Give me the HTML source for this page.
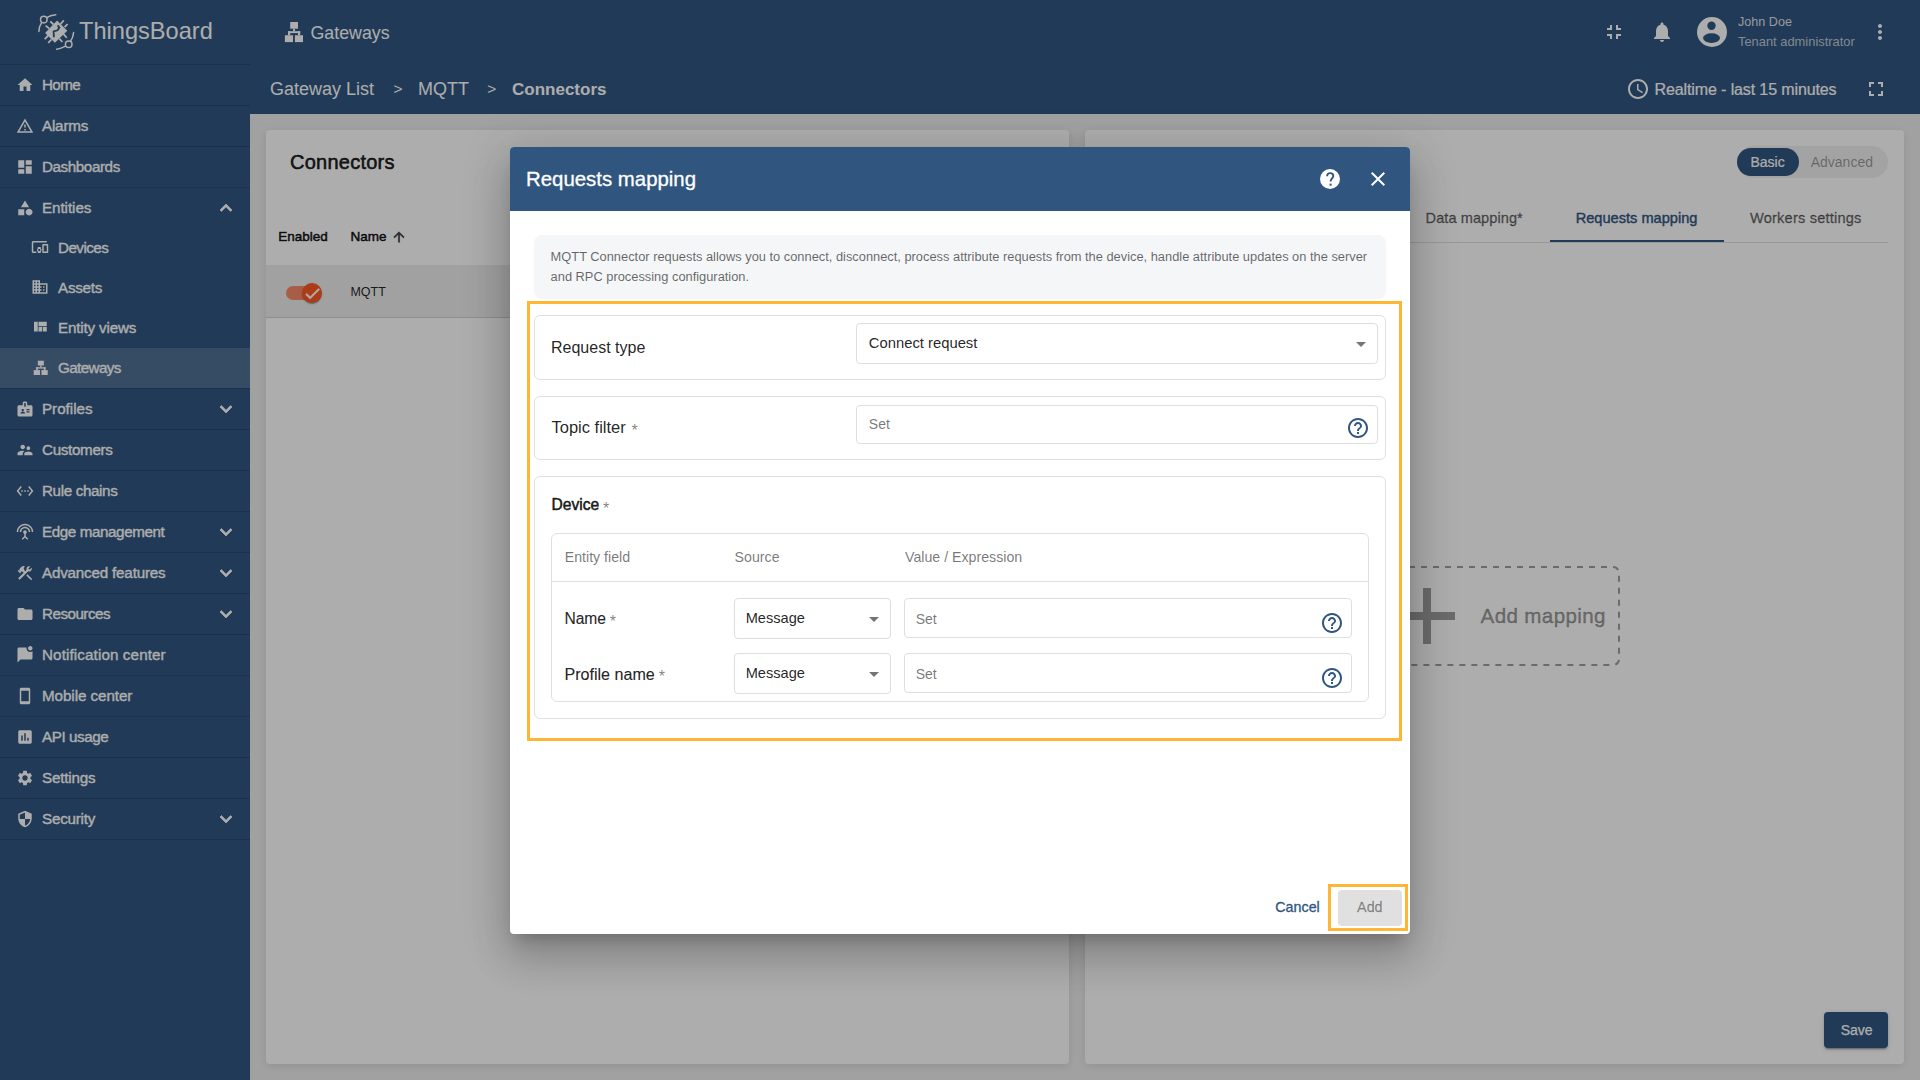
<!DOCTYPE html>
<html><head><meta charset="utf-8"><title>ThingsBoard - Requests mapping</title>
<style>
*{box-sizing:border-box;margin:0;padding:0}
html,body{width:1920px;height:1080px;overflow:hidden;background:#eeeeee;font-family:"Liberation Sans",sans-serif}
.a{position:absolute;display:block}
.t{position:absolute;line-height:1;white-space:nowrap}
.card{position:absolute;background:#fff;border-radius:4px;box-shadow:0 2px 10px rgba(0,0,0,.1)}
</style></head><body>
<div class="a" style="left:0;top:0;width:250px;height:1080px;background:#305680"></div>
<svg class="a" style="left:30px;top:8px" width="60" height="48" viewBox="0 0 60 48">
<g fill="none" stroke="#fff" stroke-width="1.5" stroke-linecap="round">
<circle cx="13.8" cy="11.6" r="3.3"/>
<path d="M16.8 9.6 Q20 7.2 25.8 6.7"/>
<path d="M11.6 14.7 Q9 18.5 8.9 23.6"/>
<circle cx="38.7" cy="36.2" r="3.3"/>
<path d="M40.6 33.2 Q43.4 29 43.6 24.4"/>
<path d="M35.5 38.2 Q31 40.5 26.7 41.3"/>
<path stroke-width="1.8" stroke-linecap="butt" d="M23.6 16.5 L20.2 13.3 M19.2 20.5 L15.6 17.6 M30.6 16 L33.8 12.4 M34.6 19.2 L37.6 16 M33.3 25.7 L36.7 29.8 M29.3 30.6 L32.4 34 M18.3 27.5 L14.7 31.1 M21.4 31.5 L18.2 34.9"/>
</g>
<path fill="#fff" d="M27.1 12.4 L37.3 22.7 L24.9 34.7 L15.1 24.9 Z"/>
<path fill="none" stroke="#305680" stroke-width="1.8" d="M27.6 17.4 L29.4 19.6 L27.5 22.3 L23.6 23.5 L23.9 29.2"/>
</svg>
<div class="t" style="left:79px;top:19.52px;font-size:23.6px;color:#ffffff;">ThingsBoard</div>
<div class="a" style="left:0;top:64px;width:250px;height:1px;background:rgba(0,0,0,0.14)"></div>
<svg class="a" style="left:15.5px;top:75.5px;" width="18" height="18" viewBox="0 0 24 24"><path fill="#ffffff" d="M10 20v-6h4v6h5v-8h3L12 3 2 12h3v8z"/></svg>
<div class="t" style="left:42px;top:77.03px;font-size:15.2px;color:#ffffff;letter-spacing:-0.6px;-webkit-text-stroke:0.35px #ffffff;">Home</div>
<div class="a" style="left:0;top:105px;width:250px;height:1px;background:rgba(0,0,0,0.14)"></div>
<svg class="a" style="left:15.5px;top:116.5px;" width="18" height="18" viewBox="0 0 24 24"><path fill="#ffffff" d="M12 5.99L19.53 19H4.47L12 5.99M12 2L1 21h22L12 2zm1 14h-2v2h2v-2zm0-6h-2v4h2v-4z"/></svg>
<div class="t" style="left:42px;top:118.03px;font-size:15.2px;color:#ffffff;letter-spacing:-0.19px;-webkit-text-stroke:0.35px #ffffff;">Alarms</div>
<div class="a" style="left:0;top:146px;width:250px;height:1px;background:rgba(0,0,0,0.14)"></div>
<svg class="a" style="left:15.5px;top:157.5px;" width="18" height="18" viewBox="0 0 24 24"><path fill="#ffffff" d="M3 13h8V3H3v10zm0 8h8v-6H3v6zm10 0h8V11h-8v10zm0-18v6h8V3h-8z"/></svg>
<div class="t" style="left:42px;top:159.03px;font-size:15.2px;color:#ffffff;letter-spacing:-0.406px;-webkit-text-stroke:0.35px #ffffff;">Dashboards</div>
<div class="a" style="left:0;top:187px;width:250px;height:1px;background:rgba(0,0,0,0.14)"></div>
<svg class="a" style="left:15.5px;top:198.5px;" width="18" height="18" viewBox="0 0 24 24"><path fill="#ffffff" d="M12 2l-5.5 9h11zM17.5 13a4.5 4.5 0 1 0 0.001 0zM3 13.5h8v8H3z"/></svg>
<div class="t" style="left:42px;top:200.03px;font-size:15.2px;color:#ffffff;letter-spacing:-0.064px;-webkit-text-stroke:0.35px #ffffff;">Entities</div>
<svg class="a" style="left:214px;top:196px;stroke:#fff;stroke-width:0.7px" width="24" height="24" viewBox="0 0 24 24"><path fill="#ffffff" d="M12 8l-6 6 1.41 1.41L12 10.83l4.59 4.58L18 14z"/></svg>
<svg class="a" style="left:31px;top:238px;" width="18" height="18" viewBox="0 0 24 24"><path fill="#ffffff" d="M3 6h18V4H3c-1.1 0-2 .9-2 2v12c0 1.1.9 2 2 2h4v-2H3V6zm10 6H9v1.78c-.61.55-1 1.33-1 2.22s.39 1.67 1 2.22V20h4v-1.78c.61-.55 1-1.34 1-2.22s-.39-1.670-1-2.22V12zm-2 5.5c-.83 0-1.5-.67-1.5-1.5s.67-1.5 1.5-1.5 1.5.67 1.5 1.5-.67 1.5-1.5 1.5zM22 8h-6c-.5 0-1 .5-1 1v10c0 .5.5 1 1 1h6c.5 0 1-.5 1-1V9c0-.5-.5-1-1-1zm-1 10h-4v-8h4v8z"/></svg>
<div class="t" style="left:58px;top:239.93px;font-size:15.2px;color:#ffffff;letter-spacing:-0.533px;-webkit-text-stroke:0.35px #ffffff;">Devices</div>
<svg class="a" style="left:31px;top:278px;" width="18" height="18" viewBox="0 0 24 24"><path fill="#ffffff" d="M12 7V3H2v18h20V7H12zM6 19H4v-2h2v2zm0-4H4v-2h2v2zm0-4H4V9h2v2zm0-4H4V5h2v2zm4 12H8v-2h2v2zm0-4H8v-2h2v2zm0-4H8V9h2v2zm0-4H8V5h2v2zm10 12h-8v-2h2v-2h-2v-2h2v-2h-2V9h8v10zm-2-8h-2v2h2v-2zm0 4h-2v2h2v-2z"/></svg>
<div class="t" style="left:58px;top:279.93px;font-size:15.2px;color:#ffffff;letter-spacing:-0.24px;-webkit-text-stroke:0.35px #ffffff;">Assets</div>
<svg class="a" style="left:31px;top:318px;" width="18" height="18" viewBox="0 0 24 24"><path fill="#ffffff" d="M10 18h5v-6h-5v6zm-6 0h5V5H4v13zm12 0h5v-6h-5v6zM10 5v6h11V5H10z"/></svg>
<div class="t" style="left:58px;top:319.93px;font-size:15.2px;color:#ffffff;letter-spacing:-0.164px;-webkit-text-stroke:0.35px #ffffff;">Entity views</div>
<div class="a" style="left:0;top:348px;width:250px;height:40px;background:rgba(255,255,255,0.155)"></div>
<svg class="a" style="left:33.3px;top:360px" width="15.5" height="15.6" viewBox="0 0 20 22" preserveAspectRatio="none"><g fill="#fff"><rect x="6.2" y="1" width="7.8" height="6.7"/><rect x="9.1" y="7.7" width="1.9" height="2.6"/><rect x="4" y="10.2" width="12.2" height="1.9"/><rect x="4" y="10.2" width="2.2" height="4.1"/><rect x="14" y="10.2" width="2.2" height="4.1"/><rect x="0.9" y="14.25" width="8.1" height="6.85"/><rect x="10.9" y="14.25" width="8.1" height="6.85"/></g></svg>
<div class="t" style="left:58px;top:359.93px;font-size:15.2px;color:#ffffff;letter-spacing:-0.6px;-webkit-text-stroke:0.35px #ffffff;">Gateways</div>
<div class="a" style="left:0;top:388px;width:250px;height:1px;background:rgba(0,0,0,0.14)"></div>
<svg class="a" style="left:15.5px;top:399.5px;" width="18" height="18" viewBox="0 0 24 24"><path fill="#ffffff" d="M20 7h-5V4c0-1.1-.9-2-2-2h-2c-1.1 0-2 .9-2 2v3H4c-1.1 0-2 .9-2 2v11c0 1.1.9 2 2 2h16c1.1 0 2-.9 2-2V9c0-1.1-.9-2-2-2zM9 12c.83 0 1.5.67 1.5 1.5S9.83 15 9 15s-1.5-.67-1.5-1.5S8.17 12 9 12zm3 6H6v-.75c0-1 2-1.5 3-1.5s3 .5 3 1.5V18zm1-9h-2V4h2v5zm5 7.5h-4V15h4v1.5zm0-3h-4V12h4v1.5z"/></svg>
<div class="t" style="left:42px;top:401.03px;font-size:15.2px;color:#ffffff;letter-spacing:-0.014px;-webkit-text-stroke:0.35px #ffffff;">Profiles</div>
<div class="a" style="left:0;top:429px;width:250px;height:1px;background:rgba(0,0,0,0.14)"></div>
<svg class="a" style="left:214px;top:397px;stroke:#fff;stroke-width:0.7px" width="24" height="24" viewBox="0 0 24 24"><path fill="#ffffff" d="M16.59 8.59L12 13.17 7.41 8.59 6 10l6 6 6-6z"/></svg>
<svg class="a" style="left:15.5px;top:440.5px;" width="18" height="18" viewBox="0 0 24 24"><path fill="#ffffff" d="M16.5 12c1.38 0 2.49-1.12 2.49-2.5S17.88 7 16.5 7C15.12 7 14 8.12 14 9.5s1.12 2.5 2.5 2.5zM9 11c1.66 0 2.99-1.34 2.99-3S10.66 5 9 5C7.34 5 6 6.34 6 8s1.34 3 3 3zm7.5 3c-1.83 0-5.5.92-5.5 2.75V19h11v-2.25c0-1.83-3.67-2.75-5.5-2.75zM9 13c-2.33 0-7 1.17-7 3.5V19h7v-2.25c0-.85.33-2.34 2.37-3.47C10.5 13.1 9.66 13 9 13z"/></svg>
<div class="t" style="left:42px;top:442.03px;font-size:15.2px;color:#ffffff;letter-spacing:-0.325px;-webkit-text-stroke:0.35px #ffffff;">Customers</div>
<div class="a" style="left:0;top:470px;width:250px;height:1px;background:rgba(0,0,0,0.14)"></div>
<svg class="a" style="left:15.5px;top:481.5px;" width="18" height="18" viewBox="0 0 24 24"><path fill="#ffffff" d="M7.77 6.76L6.23 5.48.82 12l5.41 6.52 1.54-1.28L3.42 12l4.35-5.24zM7 13h2v-2H7v2zm10-2h-2v2h2v-2zm-6 2h2v-2h-2v2zm6.77-7.52l-1.54 1.28L20.58 12l-4.35 5.24 1.54 1.28L23.18 12l-5.41-6.52z"/></svg>
<div class="t" style="left:42px;top:483.03px;font-size:15.2px;color:#ffffff;letter-spacing:-0.36px;-webkit-text-stroke:0.35px #ffffff;">Rule chains</div>
<div class="a" style="left:0;top:511px;width:250px;height:1px;background:rgba(0,0,0,0.14)"></div>
<svg class="a" style="left:15.5px;top:522.5px;" width="18" height="18" viewBox="0 0 24 24"><path fill="#ffffff" d="M12 5c-3.87 0-7 3.13-7 7h2c0-2.76 2.24-5 5-5s5 2.24 5 5h2c0-3.87-3.13-7-7-7zm1 9.29c.88-.39 1.5-1.26 1.5-2.29 0-1.38-1.12-2.5-2.5-2.5S9.5 10.62 9.5 12c0 1.02.62 1.9 1.5 2.29v3.3L7.59 21 9 22.41l3-3 3 3L16.41 21 13 17.59v-3.3zM12 1C5.93 1 1 5.93 1 12h2c0-4.97 4.03-9 9-9s9 4.03 9 9h2c0-6.07-4.93-11-11-11z"/></svg>
<div class="t" style="left:42px;top:524.03px;font-size:15.2px;color:#ffffff;letter-spacing:-0.4px;-webkit-text-stroke:0.35px #ffffff;">Edge management</div>
<div class="a" style="left:0;top:552px;width:250px;height:1px;background:rgba(0,0,0,0.14)"></div>
<svg class="a" style="left:214px;top:520px;stroke:#fff;stroke-width:0.7px" width="24" height="24" viewBox="0 0 24 24"><path fill="#ffffff" d="M16.59 8.59L12 13.17 7.41 8.59 6 10l6 6 6-6z"/></svg>
<svg class="a" style="left:15.5px;top:563.5px;" width="18" height="18" viewBox="0 0 24 24"><path fill="#ffffff" d="M13.78 15.17l1.41-1.41 6.36 6.36-1.41 1.41zM17.5 10c1.93 0 3.5-1.57 3.5-3.5 0-.58-.16-1.12-.41-1.59l-2.7 2.7-1.49-1.49 2.7-2.7C18.62 3.16 18.08 3 17.5 3 15.57 3 14 4.57 14 6.5c0 .41.08.8.21 1.16l-1.85 1.85-1.78-1.78.71-.71-1.41-1.41L12 3.49c-1.17-1.17-3.07-1.17-4.24 0L4.22 7.03l1.41 1.41H2.81l-.71.71 3.54 3.54.71-.71V9.15l1.41 1.41.71-.71 1.78 1.78-7.41 7.41 2.12 2.12L16.34 9.79c.36.13.75.21 1.16.21z"/></svg>
<div class="t" style="left:42px;top:565.03px;font-size:15.2px;color:#ffffff;letter-spacing:-0.188px;-webkit-text-stroke:0.35px #ffffff;">Advanced features</div>
<div class="a" style="left:0;top:593px;width:250px;height:1px;background:rgba(0,0,0,0.14)"></div>
<svg class="a" style="left:214px;top:561px;stroke:#fff;stroke-width:0.7px" width="24" height="24" viewBox="0 0 24 24"><path fill="#ffffff" d="M16.59 8.59L12 13.17 7.41 8.59 6 10l6 6 6-6z"/></svg>
<svg class="a" style="left:15.5px;top:604.5px;" width="18" height="18" viewBox="0 0 24 24"><path fill="#ffffff" d="M10 4H4c-1.1 0-1.99.9-1.99 2L2 18c0 1.1.9 2 2 2h16c1.1 0 2-.9 2-2V8c0-1.1-.9-2-2-2h-8l-2-2z"/></svg>
<div class="t" style="left:42px;top:606.03px;font-size:15.2px;color:#ffffff;letter-spacing:-0.513px;-webkit-text-stroke:0.35px #ffffff;">Resources</div>
<div class="a" style="left:0;top:634px;width:250px;height:1px;background:rgba(0,0,0,0.14)"></div>
<svg class="a" style="left:214px;top:602px;stroke:#fff;stroke-width:0.7px" width="24" height="24" viewBox="0 0 24 24"><path fill="#ffffff" d="M16.59 8.59L12 13.17 7.41 8.59 6 10l6 6 6-6z"/></svg>
<svg class="a" style="left:15.5px;top:645.5px;" width="18" height="18" viewBox="0 0 24 24"><path fill="#ffffff" d="M22 6.98V16c0 1.1-.9 2-2 2H6l-4 4V4c0-1.1.9-2 2-2h10.1c-.06.32-.1.66-.1 1 0 2.76 2.24 5 5 5 1.13 0 2.16-.39 3-1.02zM16 3c0 1.66 1.34 3 3 3s3-1.34 3-3-1.34-3-3-3-3 1.34-3 3z"/></svg>
<div class="t" style="left:42px;top:647.03px;font-size:15.2px;color:#ffffff;letter-spacing:0.117px;-webkit-text-stroke:0.35px #ffffff;">Notification center</div>
<div class="a" style="left:0;top:675px;width:250px;height:1px;background:rgba(0,0,0,0.14)"></div>
<svg class="a" style="left:15.5px;top:686.5px;" width="18" height="18" viewBox="0 0 24 24"><path fill="#ffffff" d="M17 1.01L7 1c-1.1 0-1.99.9-1.99 2v18c0 1.1.89 2 1.99 2h10c1.1 0 2-.9 2-2V3c0-1.1-.9-1.99-2-1.99zM17 19H7V5h10v14z"/></svg>
<div class="t" style="left:42px;top:688.03px;font-size:15.2px;color:#ffffff;letter-spacing:-0.067px;-webkit-text-stroke:0.35px #ffffff;">Mobile center</div>
<div class="a" style="left:0;top:716px;width:250px;height:1px;background:rgba(0,0,0,0.14)"></div>
<svg class="a" style="left:15.5px;top:727.5px;" width="18" height="18" viewBox="0 0 24 24"><path fill="#ffffff" d="M19 3H5c-1.1 0-2 .9-2 2v14c0 1.1.9 2 2 2h14c1.1 0 2-.9 2-2V5c0-1.1-.9-2-2-2zM9 17H7v-7h2v7zm4 0h-2V7h2v10zm4 0h-2v-4h2v4z"/></svg>
<div class="t" style="left:42px;top:729.03px;font-size:15.2px;color:#ffffff;letter-spacing:-0.425px;-webkit-text-stroke:0.35px #ffffff;">API usage</div>
<div class="a" style="left:0;top:757px;width:250px;height:1px;background:rgba(0,0,0,0.14)"></div>
<svg class="a" style="left:15.5px;top:768.5px;" width="18" height="18" viewBox="0 0 24 24"><path fill="#ffffff" d="M19.14 12.94c.04-.3.06-.61.06-.94 0-.32-.02-.64-.07-.94l2.03-1.58c.18-.14.23-.41.12-.61l-1.92-3.32c-.12-.22-.37-.29-.59-.22l-2.39.96c-.5-.38-1.03-.7-1.62-.94l-.36-2.54c-.04-.24-.24-.41-.48-.41h-3.84c-.24 0-.43.17-.47.41l-.36 2.54c-.59.24-1.13.57-1.62.94l-2.39-.96c-.22-.08-.47 0-.59.22L2.74 8.87c-.12.21-.08.47.12.61l2.03 1.58c-.05.3-.09.63-.09.94s.02.64.07.94l-2.03 1.58c-.18.14-.23.41-.12.61l1.92 3.32c.12.22.37.29.59.22l2.39-.96c.5.38 1.03.7 1.62.94l.36 2.54c.05.24.24.41.48.41h3.84c.24 0 .44-.17.47-.41l.36-2.54c.59-.24 1.13-.56 1.62-.94l2.39.96c.22.08.47 0 .59-.22l1.92-3.32c.12-.22.07-.47-.12-.61l-2.01-1.58zM12 15.6c-1.98 0-3.6-1.62-3.6-3.6s1.62-3.6 3.6-3.6 3.6 1.62 3.6 3.6-1.62 3.6-3.6 3.6z"/></svg>
<div class="t" style="left:42px;top:770.03px;font-size:15.2px;color:#ffffff;letter-spacing:-0.171px;-webkit-text-stroke:0.35px #ffffff;">Settings</div>
<div class="a" style="left:0;top:798px;width:250px;height:1px;background:rgba(0,0,0,0.14)"></div>
<svg class="a" style="left:15.5px;top:809.5px;" width="18" height="18" viewBox="0 0 24 24"><path fill="#ffffff" d="M12 1L3 5v6c0 5.55 3.84 10.74 9 12 5.16-1.26 9-6.45 9-12V5l-9-4zm0 10.99h7c-.53 4.12-3.28 7.79-7 8.94V12H5V6.3l7-3.11v8.8z"/></svg>
<div class="t" style="left:42px;top:811.03px;font-size:15.2px;color:#ffffff;letter-spacing:-0.214px;-webkit-text-stroke:0.35px #ffffff;">Security</div>
<div class="a" style="left:0;top:839px;width:250px;height:1px;background:rgba(0,0,0,0.14)"></div>
<svg class="a" style="left:214px;top:807px;stroke:#fff;stroke-width:0.7px" width="24" height="24" viewBox="0 0 24 24"><path fill="#ffffff" d="M16.59 8.59L12 13.17 7.41 8.59 6 10l6 6 6-6z"/></svg>
<div class="a" style="left:250px;top:0;width:1670px;height:114px;background:#305680"></div>
<svg class="a" style="left:284px;top:21px" width="20" height="22" viewBox="0 0 20 22" preserveAspectRatio="none"><g fill="#fff"><rect x="6.2" y="1" width="7.8" height="6.7"/><rect x="9.1" y="7.7" width="1.9" height="2.6"/><rect x="4" y="10.2" width="12.2" height="1.9"/><rect x="4" y="10.2" width="2.2" height="4.1"/><rect x="14" y="10.2" width="2.2" height="4.1"/><rect x="0.9" y="14.25" width="8.1" height="6.85"/><rect x="10.9" y="14.25" width="8.1" height="6.85"/></g></svg>
<div class="t" style="left:310.5px;top:24.93px;font-size:17.8px;color:#ffffff;">Gateways</div>
<div class="t" style="left:270px;top:79.76px;font-size:18px;color:#ffffff;">Gateway List</div>
<div class="t" style="left:393.5px;top:81.08px;font-size:15.5px;color:#ffffff;">&gt;</div>
<div class="t" style="left:418px;top:79.76px;font-size:18px;color:#ffffff;">MQTT</div>
<div class="t" style="left:487.3px;top:81.08px;font-size:15.5px;color:#ffffff;">&gt;</div>
<div class="t" style="left:512px;top:80.61px;font-size:17px;color:#ffffff;font-weight:bold;">Connectors</div>
<svg class="a" style="left:1602px;top:20px;" width="24" height="24" viewBox="0 0 24 24"><path fill="#ffffff" d="M5 16h3v3h2v-5H5v2zm3-8H5v2h5V5H8v3zm6 11h2v-3h3v-2h-5v5zm2-11V5h-2v5h5V8h-3z"/></svg>
<svg class="a" style="left:1650px;top:19.5px;" width="24" height="24" viewBox="0 0 24 24"><path fill="#ffffff" d="M12 22c1.1 0 2-.9 2-2h-4c0 1.1.89 2 2 2zm6-6v-5c0-3.07-1.64-5.64-4.5-6.32V4c0-.83-.67-1.5-1.5-1.5s-1.5.67-1.5 1.5v.68C7.63 5.36 6 7.92 6 11v5l-2 2v1h16v-1l-2-2z"/></svg>
<svg class="a" style="left:1697px;top:17px" width="30" height="30" viewBox="0 0 30 30"><circle cx="15" cy="15" r="15" fill="#fff"/><circle cx="14.5" cy="8.8" r="4.2" fill="#305680"/><ellipse cx="14.5" cy="21.1" rx="8.5" ry="4.8" fill="#305680"/></svg>
<div class="t" style="left:1738px;top:16.33px;font-size:12.6px;color:rgba(255,255,255,0.85);">John Doe</div>
<div class="t" style="left:1738px;top:35.88px;font-size:12.9px;color:rgba(255,255,255,0.7);">Tenant administrator</div>
<svg class="a" style="left:1868px;top:20px;" width="24" height="24" viewBox="0 0 24 24"><path fill="#ffffff" d="M12 8c1.1 0 2-.9 2-2s-.9-2-2-2-2 .9-2 2 .9 2 2 2zm0 2c-1.1 0-2 .9-2 2s.9 2 2 2 2-.9 2-2-.9-2-2-2zm0 6c-1.1 0-2 .9-2 2s.9 2 2 2 2-.9 2-2-.9-2-2-2z"/></svg>
<svg class="a" style="left:1626px;top:77px;" width="24" height="24" viewBox="0 0 24 24"><path fill="#ffffff" d="M11.99 2C6.47 2 2 6.48 2 12s4.47 10 9.99 10C17.52 22 22 17.52 22 12S17.52 2 11.99 2zM12 20c-4.42 0-8-3.58-8-8s3.58-8 8-8 8 3.58 8 8-3.58 8-8 8zm.5-13H11v6l5.25 3.15.75-1.23-4.5-2.67z"/></svg>
<div class="t" style="left:1654.6px;top:82.06px;font-size:16px;color:#ffffff;letter-spacing:-0.12px;-webkit-text-stroke:0.2px #ffffff;">Realtime - last 15 minutes</div>
<svg class="a" style="left:1864px;top:76.5px;" width="24" height="24" viewBox="0 0 24 24"><path fill="#ffffff" d="M7 14H5v5h5v-2H7v-3zm-2-4h2V7h3V5H5v5zm12 7h-3v2h5v-5h-2v3zM14 5v2h3v3h2V5h-5z"/></svg>
<div class="a" style="left:250px;top:114px;width:1670px;height:966px;background:#eeeeee"></div>
<div class="card" style="left:266px;top:130px;width:803px;height:934px"></div>
<div class="card" style="left:1085px;top:130px;width:819px;height:934px"></div>
<div class="t" style="left:290px;top:151.67px;font-size:20.0px;color:rgba(0,0,0,0.87);letter-spacing:0.25px;-webkit-text-stroke:0.6px rgba(0,0,0,0.87);">Connectors</div>
<div class="t" style="left:278.3px;top:229.87px;font-size:13.5px;color:rgba(0,0,0,0.87);-webkit-text-stroke:0.55px rgba(0,0,0,0.87);">Enabled</div>
<div class="t" style="left:350.4px;top:229.87px;font-size:13.5px;color:rgba(0,0,0,0.87);-webkit-text-stroke:0.55px rgba(0,0,0,0.87);">Name</div>
<svg class="a" style="left:391.3px;top:229.3px;stroke:rgba(0,0,0,0.75);stroke-width:0.6px" width="16" height="16" viewBox="0 0 24 24"><path fill="rgba(0,0,0,0.75)" d="M4 12l1.41 1.41L11 7.83V20h2V7.83l5.58 5.59L20 12l-8-8-8 8z"/></svg>
<div class="a" style="left:266px;top:265px;width:803px;height:53px;background:#eeeeee;border-bottom:1px solid rgba(0,0,0,0.12)"></div>
<div class="a" style="left:286px;top:286px;width:34px;height:14px;border-radius:7px;background:rgba(255,87,34,0.66)"></div>
<div class="a" style="left:302px;top:283px;width:20px;height:20px;border-radius:10px;background:#ff5722;box-shadow:0 2px 1px -1px rgba(0,0,0,.2),0 1px 1px 0 rgba(0,0,0,.14),0 1px 3px 0 rgba(0,0,0,.12)"></div>
<svg class="a" style="left:302.5px;top:283.5px" width="19" height="19" viewBox="0 0 24 24"><path fill="#fff" stroke="#fff" stroke-width="0.9" d="M9 16.17L4.83 12l-1.42 1.41L9 19 21 7l-1.41-1.41z"/></svg>
<div class="t" style="left:350.4px;top:286.42px;font-size:12.5px;color:rgba(0,0,0,0.87);">MQTT</div>
<div class="a" style="left:1737px;top:146px;width:151px;height:31.5px;border-radius:16px;background:rgba(0,0,0,0.06)"></div>
<div class="a" style="left:1737px;top:148px;width:62px;height:28px;border-radius:14px;background:#305680"></div>
<div class="t" style="left:1750.5px;top:154.85px;font-size:14px;color:#ffffff;-webkit-text-stroke:0.2px #ffffff;">Basic</div>
<div class="t" style="left:1810.7px;top:154.85px;font-size:14px;color:rgba(0,0,0,0.38);">Advanced</div>
<div class="a" style="left:1101px;top:242px;width:787px;height:1px;background:rgba(0,0,0,0.12)"></div>
<div class="a" style="left:1550px;top:240px;width:174px;height:2px;background:#305680"></div>
<div class="t" style="left:1425.6px;top:211.14px;font-size:14.6px;color:rgba(0,0,0,0.56);letter-spacing:0.05px;-webkit-text-stroke:0.35px rgba(0,0,0,0.56);">Data mapping*</div>
<div class="t" style="left:1575.7px;top:211.14px;font-size:14.6px;color:#305680;-webkit-text-stroke:0.4px #305680;">Requests mapping</div>
<div class="t" style="left:1750px;top:211.14px;font-size:14.6px;color:rgba(0,0,0,0.56);letter-spacing:0.2px;-webkit-text-stroke:0.35px rgba(0,0,0,0.56);">Workers settings</div>
<svg class="a" style="left:1369px;top:566px" width="251" height="100" viewBox="0 0 251 100"><rect x="1" y="1" width="249" height="98" rx="6" ry="6" fill="none" stroke="rgba(0,0,0,0.38)" stroke-width="2" stroke-dasharray="6 6" stroke-dashoffset="3"/></svg>
<svg class="a" style="left:1379px;top:568px;" width="96" height="96" viewBox="0 0 24 24"><path fill="rgba(0,0,0,0.38)" d="M19 13h-6v6h-2v-6H5v-2h6V5h2v6h6v2z"/></svg>
<div class="t" style="left:1480.6px;top:606.06px;font-size:20.6px;color:rgba(0,0,0,0.38);letter-spacing:0.35px;-webkit-text-stroke:0.45px rgba(0,0,0,0.38);">Add mapping</div>
<div class="a" style="left:1824px;top:1012px;width:64px;height:36px;border-radius:4px;background:#305680;box-shadow:0 3px 1px -2px rgba(0,0,0,.2),0 2px 2px 0 rgba(0,0,0,.14),0 1px 5px 0 rgba(0,0,0,.12)"></div>
<div class="t" style="left:1840.7px;top:1023.15px;font-size:14px;color:#ffffff;-webkit-text-stroke:0.25px #ffffff;">Save</div>
<div class="a" style="left:0;top:0;width:1920px;height:1080px;background:rgba(0,0,0,0.32)"></div>
<div class="a" style="left:510px;top:147px;width:900px;height:787px;background:#fff;border-radius:4px;box-shadow:0 11px 15px -7px rgba(0,0,0,.2),0 24px 38px 3px rgba(0,0,0,.14),0 9px 46px 8px rgba(0,0,0,.12)"></div>
<div class="a" style="left:510px;top:147px;width:900px;height:64px;background:#305680;border-radius:4px 4px 0 0"></div>
<div class="t" style="left:526px;top:168.73px;font-size:20.4px;color:#ffffff;-webkit-text-stroke:0.3px #ffffff;">Requests mapping</div>
<svg class="a" style="left:1318px;top:167px" width="24" height="24" viewBox="0 0 24 24"><circle cx="12" cy="12" r="10" fill="#fff"/><path fill="none" stroke="#305680" stroke-width="1.9" d="M9.1 9.3 C9.1 7.3 10.4 6.1 12.2 6.1 C14 6.1 15.3 7.3 15.3 9 C15.3 11.4 12.6 11.6 12.6 14.6"/><rect x="11.6" y="16.6" width="2" height="2.1" fill="#305680"/></svg>
<svg class="a" style="left:1366px;top:167px;" width="24" height="24" viewBox="0 0 24 24"><path fill="#ffffff" d="M19 6.41L17.59 5 12 10.59 6.41 5 5 6.41 10.59 12 5 17.59 6.41 19 12 13.41 17.59 19 19 17.59 13.41 12z"/></svg>
<div class="a" style="left:534px;top:235px;width:852px;height:63.5px;border-radius:8px;background:#f4f6f8"></div>
<div class="t" style="left:550.6px;top:250.82px;font-size:12.85px;color:rgba(0,0,0,0.6);">MQTT Connector requests allows you to connect, disconnect, process attribute requests from the device, handle attribute updates on the server</div>
<div class="t" style="left:550.6px;top:271.32px;font-size:12.85px;color:rgba(0,0,0,0.6);">and RPC processing configuration.</div>
<div class="a" style="left:527px;top:301px;width:875px;height:440px;border:3px solid #feb734"></div>
<div class="a" style="left:534px;top:315px;width:852px;height:64.5px;border:1px solid #e0e0e0;border-radius:6px"></div>
<div class="a" style="left:534px;top:396px;width:852px;height:63.5px;border:1px solid #e0e0e0;border-radius:6px"></div>
<div class="a" style="left:534px;top:476px;width:852px;height:242.5px;border:1px solid #e0e0e0;border-radius:6px"></div>
<div class="t" style="left:551px;top:339.96px;font-size:16px;color:rgba(0,0,0,0.87);">Request type</div>
<div class="t" style="left:551.5px;top:419.03px;font-size:16.5px;color:rgba(0,0,0,0.87);">Topic filter</div>
<div class="t" style="left:631.5px;top:423.46px;font-size:16px;color:rgba(0,0,0,0.5);">*</div>
<div class="t" style="left:551.5px;top:496.99px;font-size:15.6px;color:rgba(0,0,0,0.87);-webkit-text-stroke:0.55px rgba(0,0,0,0.87);">Device</div>
<div class="t" style="left:603px;top:500.66px;font-size:16px;color:rgba(0,0,0,0.5);">*</div>
<div class="a" style="left:856px;top:323px;width:522px;height:40.5px;border:1px solid #dedede;border-radius:4px"></div>
<div class="t" style="left:868.8px;top:335.77px;font-size:14.8px;color:rgba(0,0,0,0.87);">Connect request</div>
<svg class="a" style="left:1356px;top:342px" width="10" height="5" viewBox="0 0 10 5"><path fill="rgba(0,0,0,0.54)" d="M0 0h10L5 5z"/></svg>
<div class="a" style="left:856px;top:404.5px;width:522px;height:39px;border:1px solid #dedede;border-radius:4px"></div>
<div class="t" style="left:868.8px;top:417.15px;font-size:14px;color:rgba(0,0,0,0.55);">Set</div>
<svg class="a" style="left:1346px;top:416px;" width="24" height="24" viewBox="0 0 24 24"><path fill="#305680" d="M11 18h2v-2h-2v2zm1-16C6.48 2 2 6.48 2 12s4.48 10 10 10 10-4.48 10-10S17.52 2 12 2zm0 18c-4.41 0-8-3.59-8-8s3.59-8 8-8 8 3.59 8 8-3.59 8-8 8zm0-14c-2.21 0-4 1.79-4 4h2c0-1.1.9-2 2-2s2 .9 2 2c0 2-3 1.75-3 5h2c0-2.25 3-2.5 3-5 0-2.21-1.79-4-4-4z"/></svg>
<div class="a" style="left:551px;top:533px;width:818px;height:168.5px;border:1px solid #e0e0e0;border-radius:6px"></div>
<div class="a" style="left:552px;top:581px;width:816px;height:1px;background:#e0e0e0"></div>
<div class="t" style="left:564.7px;top:549.98px;font-size:14.2px;color:rgba(0,0,0,0.54);">Entity field</div>
<div class="t" style="left:734.6px;top:549.98px;font-size:14.2px;color:rgba(0,0,0,0.54);">Source</div>
<div class="t" style="left:905px;top:549.98px;font-size:14.2px;color:rgba(0,0,0,0.54);">Value / Expression</div>
<div class="t" style="left:564.4px;top:611.29px;font-size:15.6px;color:rgba(0,0,0,0.87);-webkit-text-stroke:0.15px rgba(0,0,0,0.87);">Name</div>
<div class="t" style="left:609.7px;top:614.16px;font-size:16px;color:rgba(0,0,0,0.5);">*</div>
<div class="a" style="left:734px;top:598.3px;width:156.5px;height:40.3px;border:1px solid #dedede;border-radius:4px"></div>
<div class="t" style="left:745.7px;top:610.94px;font-size:14.6px;color:rgba(0,0,0,0.87);">Message</div>
<svg class="a" style="left:869px;top:617.3px" width="10" height="5" viewBox="0 0 10 5"><path fill="rgba(0,0,0,0.54)" d="M0 0h10L5 5z"/></svg>
<div class="a" style="left:903.5px;top:598.3px;width:448px;height:39.3px;border:1px solid #dedede;border-radius:4px"></div>
<div class="t" style="left:915.7px;top:612.25px;font-size:14px;color:rgba(0,0,0,0.55);">Set</div>
<svg class="a" style="left:1320px;top:610.8px;" width="24" height="24" viewBox="0 0 24 24"><path fill="#305680" d="M11 18h2v-2h-2v2zm1-16C6.48 2 2 6.48 2 12s4.48 10 10 10 10-4.48 10-10S17.52 2 12 2zm0 18c-4.41 0-8-3.59-8-8s3.59-8 8-8 8 3.59 8 8-3.59 8-8 8zm0-14c-2.21 0-4 1.79-4 4h2c0-1.1.9-2 2-2s2 .9 2 2c0 2-3 1.75-3 5h2c0-2.25 3-2.5 3-5 0-2.21-1.79-4-4-4z"/></svg>
<div class="t" style="left:564.4px;top:665.87px;font-size:16.1px;color:rgba(0,0,0,0.87);-webkit-text-stroke:0.15px rgba(0,0,0,0.87);">Profile name</div>
<div class="t" style="left:658.7px;top:669.16px;font-size:16px;color:rgba(0,0,0,0.5);">*</div>
<div class="a" style="left:734px;top:653.3px;width:156.5px;height:40.3px;border:1px solid #dedede;border-radius:4px"></div>
<div class="t" style="left:745.7px;top:665.94px;font-size:14.6px;color:rgba(0,0,0,0.87);">Message</div>
<svg class="a" style="left:869px;top:672.3px" width="10" height="5" viewBox="0 0 10 5"><path fill="rgba(0,0,0,0.54)" d="M0 0h10L5 5z"/></svg>
<div class="a" style="left:903.5px;top:653.3px;width:448px;height:39.3px;border:1px solid #dedede;border-radius:4px"></div>
<div class="t" style="left:915.7px;top:667.25px;font-size:14px;color:rgba(0,0,0,0.55);">Set</div>
<svg class="a" style="left:1320px;top:665.8px;" width="24" height="24" viewBox="0 0 24 24"><path fill="#305680" d="M11 18h2v-2h-2v2zm1-16C6.48 2 2 6.48 2 12s4.48 10 10 10 10-4.48 10-10S17.52 2 12 2zm0 18c-4.41 0-8-3.59-8-8s3.59-8 8-8 8 3.59 8 8-3.59 8-8 8zm0-14c-2.21 0-4 1.79-4 4h2c0-1.1.9-2 2-2s2 .9 2 2c0 2-3 1.75-3 5h2c0-2.25 3-2.5 3-5 0-2.21-1.79-4-4-4z"/></svg>
<div class="t" style="left:1275.3px;top:899.60px;font-size:14.3px;color:#305680;-webkit-text-stroke:0.3px #305680;">Cancel</div>
<div class="a" style="left:1338px;top:890px;width:64px;height:36px;border-radius:4px;background:rgba(0,0,0,0.12)"></div>
<div class="t" style="left:1357.1px;top:899.60px;font-size:14.3px;color:rgba(0,0,0,0.38);-webkit-text-stroke:0.3px rgba(0,0,0,0.38);">Add</div>
<div class="a" style="left:1328px;top:884px;width:80px;height:47px;border:3px solid #feb734"></div>
</body></html>
